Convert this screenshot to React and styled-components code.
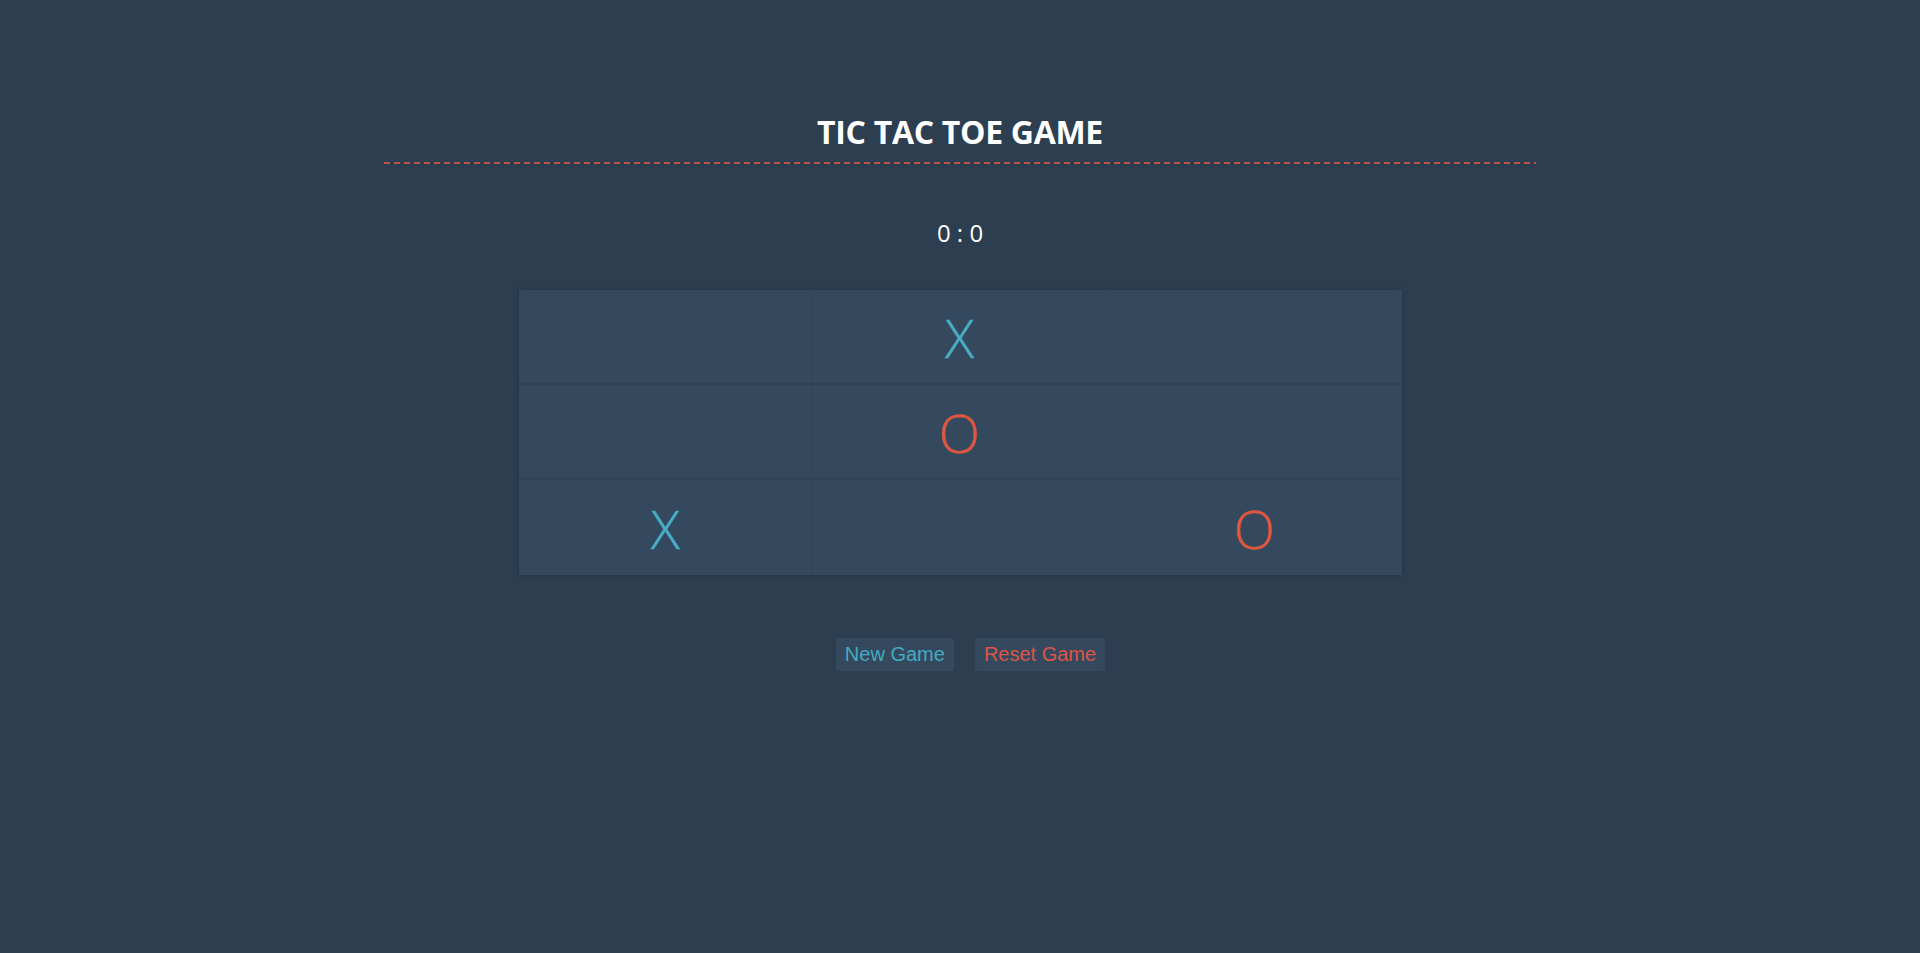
import React, { useState } from "react";
import styled, { createGlobalStyle } from "styled-components";

const Global = createGlobalStyle`
  html, body { margin: 0; padding: 0; }
  body {
    background: #2c3e50;
    min-height: 953px;
    font-family: "Open Sans", "Noto Sans", sans-serif;
  }
`;

const Page = styled.div`
  display: flex;
  flex-direction: column;
  align-items: center;
  padding-top: 112px;
`;

const Header = styled.header`
  width: 60%;
  padding-bottom: 10px;
  display: flex;
  flex-direction: column;
  align-items: center;
`;

const Title = styled.h1`
  margin: 0;
  font-size: 32px;
  line-height: 40px;
  font-weight: 700;
  color: #ffffff;
  letter-spacing: -0.3px;
`;

const Divider = styled.div`
  width: 60%;
  height: 2px;
  background: repeating-linear-gradient(
    to right,
    rgba(226, 90, 63, 0.8) 0 6px,
    transparent 6px 10px
  );
`;

const Score = styled.div`
  margin-top: 53px;
  font-size: 24px;
  line-height: 32px;
  color: #ffffff;
`;

const Board = styled.div`
  margin-top: 41px;
  width: 883px;
  display: grid;
  grid-template-columns: repeat(3, 1fr);
  grid-template-rows: repeat(3, 95px);
  box-shadow: 0 0 4px rgba(0, 0, 0, 0.18);
`;

const Cell = styled.div`
  background: #34495e;
  display: flex;
  align-items: center;
  justify-content: center;
  font-size: 54px;
  font-weight: 300;
  -webkit-text-stroke: 0.5px currentColor;
  color: ${(p) => (p.$mark === "X" ? "#48acc4" : "#df573f")};
  border-bottom: ${(p) => (p.$lastRow ? "none" : "2px solid #2f4358")};
  border-right: ${(p) => (p.$lastCol ? "none" : "1px solid #30445a")};
  box-sizing: border-box;
  line-height: 1;
  user-select: none;
`;

const Actions = styled.div`
  margin-top: 63px;
  margin-left: 21px;
  display: flex;
  gap: 21px;
`;

const Button = styled.button`
  font-family: "Liberation Sans", Arial, sans-serif;
  font-size: 20px;
  line-height: 23px;
  padding: 5px 9px;
  border: none;
  border-radius: 3px;
  background: #34495e;
  color: ${(p) => (p.$variant === "reset" ? "#dd5546" : "#45a9c2")};
  cursor: pointer;
`;

const initial = ["", "X", "", "", "O", "", "X", "", "O"];

export default function App() {
  const [cells] = useState(initial);
  return (
    <>
      <Global />
      <Page>
        <Header>
          <Title>TIC TAC TOE GAME</Title>
        </Header>
        <Divider />
        <Score>0 : 0</Score>
        <Board>
          {cells.map((c, i) => (
            <Cell
              key={i}
              $mark={c}
              $lastRow={i >= 6}
              $lastCol={i % 3 === 2}
            >
              {c}
            </Cell>
          ))}
        </Board>
        <Actions>
          <Button>New Game</Button>
          <Button $variant="reset">Reset Game</Button>
        </Actions>
      </Page>
    </>
  );
}
